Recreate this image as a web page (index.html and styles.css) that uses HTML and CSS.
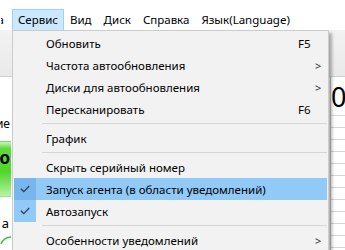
FILE: index.html
```html
<!DOCTYPE html>
<html lang="ru">
	<head>
		<meta charset="UTF-8" />
		<meta name="viewport" content="width=device-width, initial-scale=1.0" />

		<link rel="stylesheet" href="styles.css">

		<title>Сервис</title>
	</head>
	<body>
		<div id="app">
			<div id="menubar">
				<div class="mb-item cut"><span>Программа</span></div>
				<div class="mb-item active">Сервис</div>
				<div class="mb-item">Вид</div>
				<div class="mb-item">Диск</div>
				<div class="mb-item">Справка</div>
				<div class="mb-item">Язык(Language)</div>
			</div>

			<div id="toolbar"></div>

			<div id="table">
				<div class="col left">
					<div class="cell name">Состояние</div>
					<div class="cell good">Хорошо</div>
					<div class="cell temp">а</div>
					<div class="cell gauge">
						<svg width="11" height="12" viewBox="0 0 11 12">
							<path d="M1 9 Q4 2 12 2" fill="none" stroke="#3cc43c" stroke-width="1.6" />
						</svg>
					</div>
				</div>
				<div class="col middle"></div>
				<div class="col right">
					<div class="cell big">0</div>
					<div class="cell rows"></div>
				</div>
			</div>

			<div id="menu">
				<div class="mi"><span class="chk"></span><span class="label">Обновить</span><span class="key">F5</span></div>
				<div class="mi"><span class="chk"></span><span class="label">Частота автообновления</span><span class="key arrow">&gt;</span></div>
				<div class="mi"><span class="chk"></span><span class="label">Диски для автообновления</span><span class="key arrow">&gt;</span></div>
				<div class="mi"><span class="chk"></span><span class="label">Пересканировать</span><span class="key">F6</span></div>
				<div class="sep"></div>
				<div class="mi"><span class="chk"></span><span class="label">График</span><span class="key"></span></div>
				<div class="sep"></div>
				<div class="mi"><span class="chk"></span><span class="label">Скрыть серийный номер</span><span class="key"></span></div>
				<div class="mi hover checked">
					<span class="chk"><svg width="10" height="8" viewBox="0 0 10 8"><polyline points="0.8,3.8 3.8,6.6 9.2,1" fill="none" stroke="#2c4260" stroke-width="1.3" /></svg></span>
					<span class="label">Запуск агента (в области уведомлений)</span><span class="key"></span>
				</div>
				<div class="mi checked">
					<span class="chk"><svg width="10" height="8" viewBox="0 0 10 8"><polyline points="0.8,3.8 3.8,6.6 9.2,1" fill="none" stroke="#2c4260" stroke-width="1.3" /></svg></span>
					<span class="label">Автозапуск</span><span class="key"></span>
				</div>
				<div class="sep"></div>
				<div class="mi"><span class="chk"></span><span class="label">Особенности уведомлений</span><span class="key arrow">&gt;</span></div>
			</div>
		</div>
	</body>
</html>
```

FILE: styles.css
```css
body {
	margin: 0;
	background-color: #ffffff;
	font-family: "Noto Sans", "Liberation Sans", sans-serif;
	font-size: 11.5px;
	color: #000000;
}

#app {
	position: relative;
	width: 345px;
	height: 250px;
	overflow: hidden;
}

#menubar {
	height: 30px;
	display: flex;
	align-items: flex-end;
	background-color: #ffffff;

	.mb-item {
		box-sizing: border-box;
		height: 21px;
		padding: 0 5px 1px;
		display: flex;
		align-items: center;
		border: 1px solid transparent;
		border-bottom: none;
		white-space: nowrap;
	}

	.cut {
		width: 12px;
		padding: 0 7px 1px 0;
		justify-content: flex-end;
		overflow: hidden;
	}

	.active {
		background-color: #cce8ff;
		border-color: #99d1ff;
	}
}

#toolbar {
	box-sizing: border-box;
	height: 47px;
	background: linear-gradient(#f3f3f3, #e9e9e9);
	border-bottom: 1px solid #d0d0d0;
}

#table {
	display: flex;
	height: 173px;

	.col {
		display: flex;
		flex-direction: column;
	}

	.left {
		width: 11px;
		overflow: hidden;
	}

	.middle {
		flex: 1;
	}

	.right {
		width: 14px;
		border-left: 1px solid #c8c8c8;
	}

	.cell {
		box-sizing: border-box;
		display: flex;
		white-space: nowrap;
		justify-content: flex-end;
	}

	.name {
		height: 64px;
		align-items: flex-end;
		padding-bottom: 9px;
		padding-right: 1px;
		font-size: 12px;
	}

	.good {
		height: 56px;
		padding-top: 4px;
		padding-right: 1px;
		font-size: 17px;
		font-weight: bold;
		background: linear-gradient(#c9f5b8, #5fdc3c 12%, #4fd62a 55%, #b8f2a4);
		border-top: 1px solid #7ad468;
		border-bottom: 1px solid #9adf8a;
	}

	.temp {
		height: 38px;
		align-items: flex-end;
		padding-bottom: 3px;
		padding-right: 2px;
		font-size: 13px;
	}

	.gauge {
		height: 15px;
		justify-content: flex-start;
	}

	.big {
		height: 39px;
		justify-content: flex-start;
		align-items: center;
		font-size: 27px;
		border-bottom: 1px solid #d8d8d8;
	}

	.rows {
		flex: 1;
		background: repeating-linear-gradient(#ffffff 0, #ffffff 11px, #d4d4d4 11px, #d4d4d4 12px);
	}
}

#menu {
	position: absolute;
	left: 12px;
	top: 30px;
	box-sizing: border-box;
	width: 317px;
	padding: 1px;
	background-color: #f2f2f2;
	border: 1px solid #cccccc;
	box-shadow: 3px 3px 3px rgba(0, 0, 0, 0.3);

	.mi {
		display: flex;
		align-items: center;
		height: 22px;
		white-space: nowrap;
	}

	.chk {
		width: 22px;
		height: 22px;
		margin-right: 10px;
		display: flex;
		align-items: center;
		justify-content: center;
	}

	.label {
		flex: 1;
	}

	.key {
		width: 29px;
	}

	.arrow {
		box-sizing: border-box;
		padding-left: 17px;
		font-size: 11px;
		color: #333333;
	}

	.checked .chk {
		background-color: #91c9f7;
	}

	.hover {
		background-color: #91c9f7;

		.chk {
			background-color: #78b7ee;
		}
	}

	.sep {
		height: 7px;
		box-sizing: border-box;
		margin-left: 28px;
		padding-top: 3px;

		&::after {
			content: "";
			display: block;
			height: 1px;
			background-color: #d7d7d7;
		}
	}
}
```
